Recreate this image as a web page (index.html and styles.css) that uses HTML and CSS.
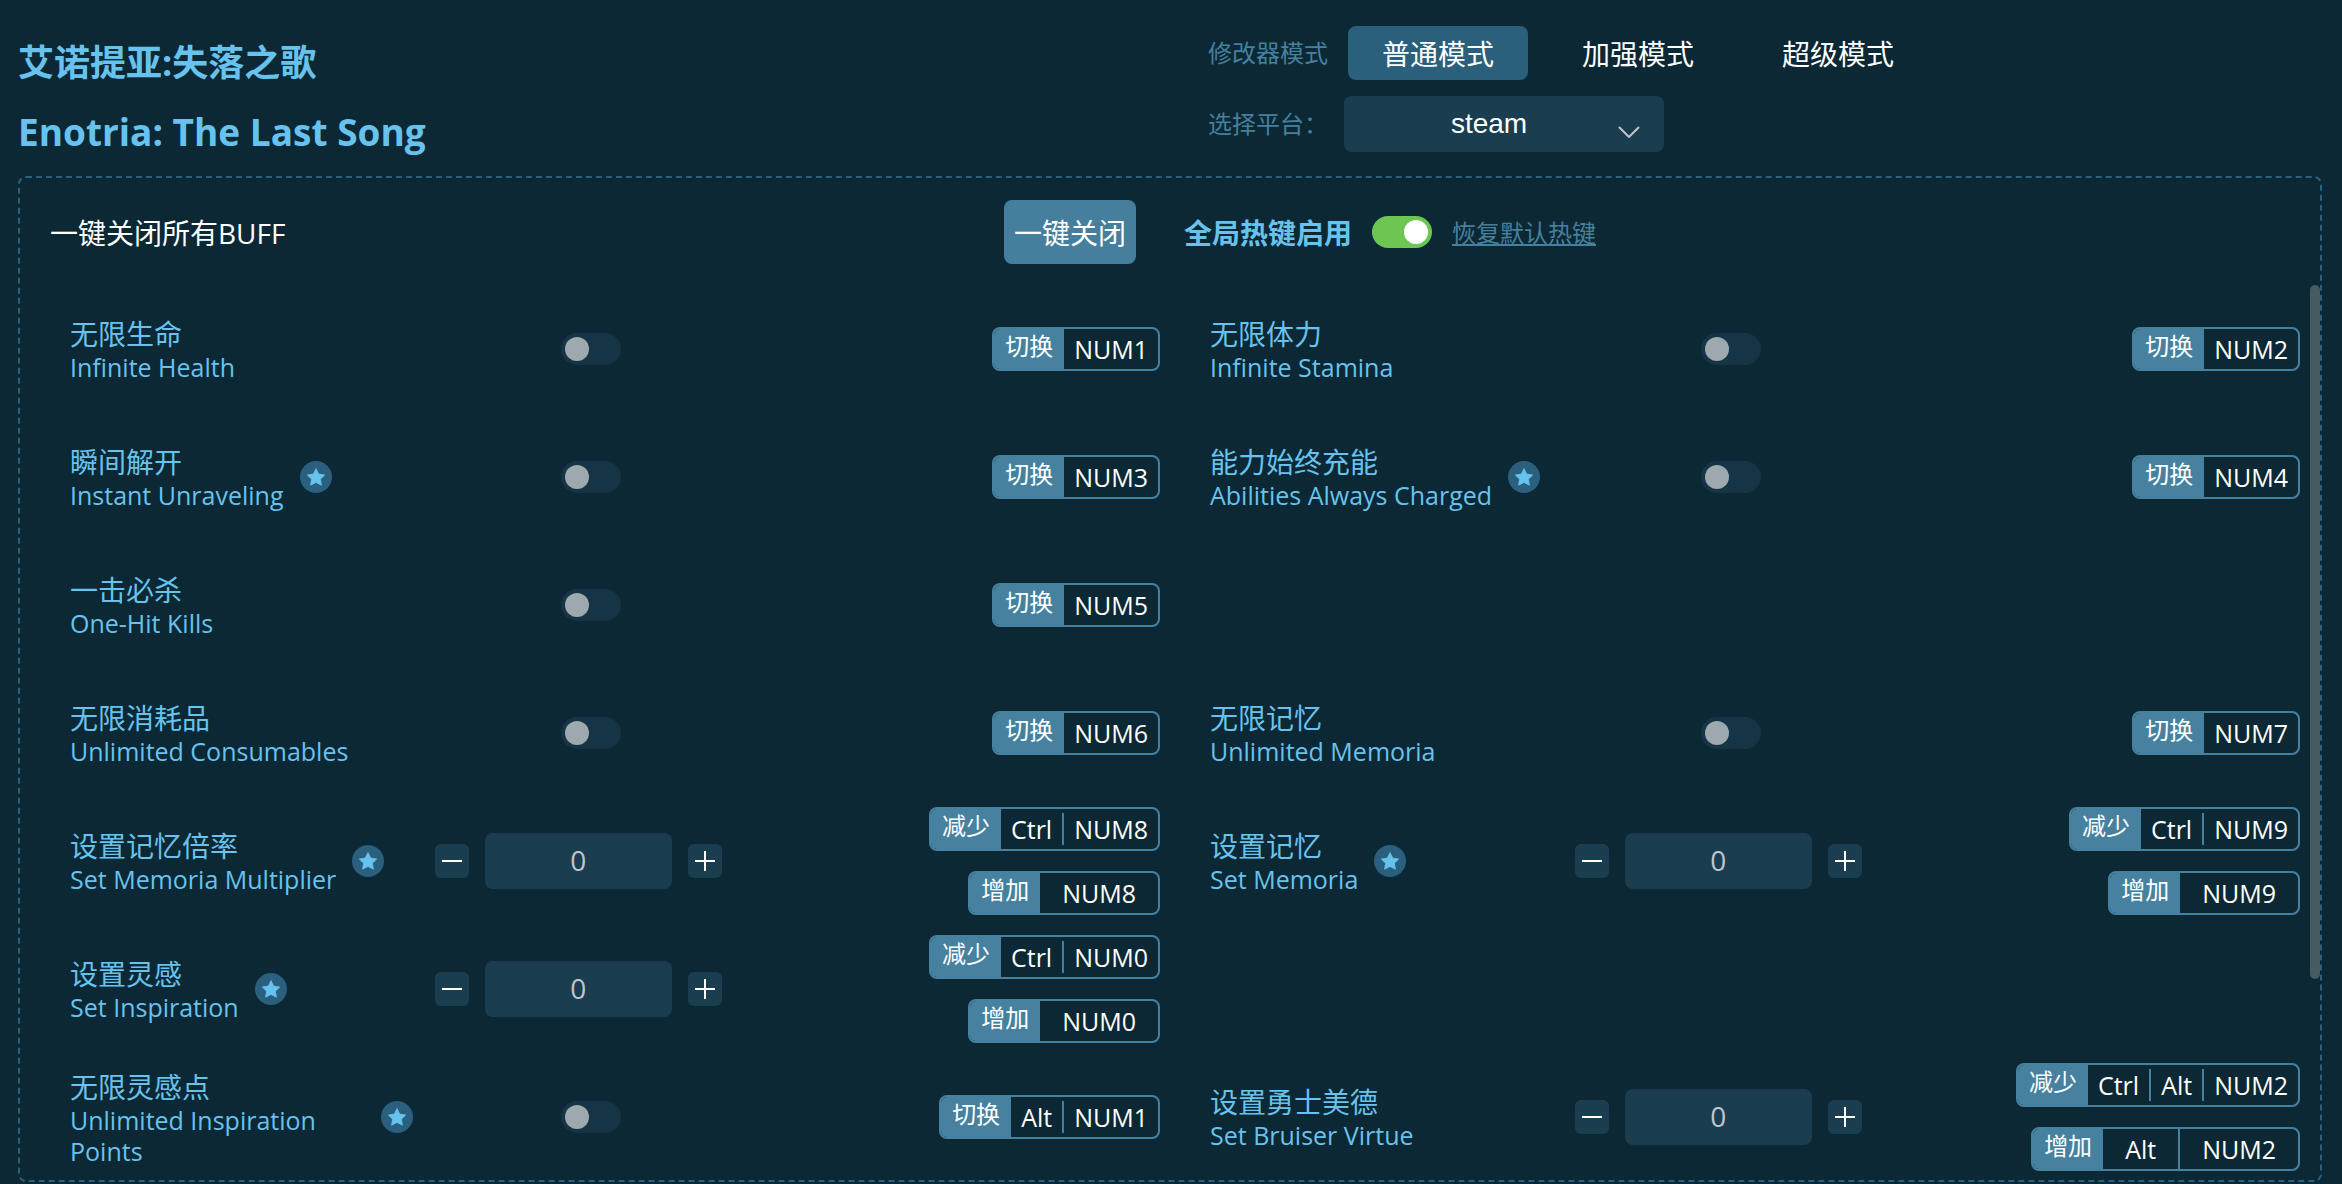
FILE: index.html
```html
<!DOCTYPE html>
<html lang="zh-CN">
<head>
    <meta charset="UTF-8">
    <meta name="viewport" content="width=device-width, initial-scale=1.0">
    <title>艾诺提亚:失落之歌</title>
    <link rel="stylesheet" href="styles.css">
</head>
<body>

    <svg class="sprite" aria-hidden="true">
        <symbol id="star" viewBox="0 0 32 32">
            <circle cx="16" cy="16" r="16" fill="#2a607d"/>
            <path d="M16 7.600l2.700 5.500 6 .9-4.300 4.200 1 6-5.400-2.800-5.400 2.800 1-6L7.300 14l6-.9z" fill="#68c2ee" stroke="#68c2ee" stroke-width="0.800" stroke-linejoin="round"/>
        </symbol>
        <symbol id="minus" viewBox="0 0 20 20">
            <path d="M0 10h20" stroke="#fff" stroke-width="2"/>
        </symbol>
        <symbol id="plus" viewBox="0 0 20 20">
            <path d="M0 10h20M10 0v20" stroke="#fff" stroke-width="2"/>
        </symbol>
    </svg>

    <header class="header">
        <div class="titles">
            <h1 class="title">艾诺提亚:失落之歌</h1>
            <h2 class="title title-en">Enotria: The Last Song</h2>
        </div>
        <div class="options">
            <div class="modes">
                <span class="option-label">修改器模式</span>
                <div class="mode-list">
                    <button class="mode active">普通模式</button>
                    <button class="mode">加强模式</button>
                    <button class="mode">超级模式</button>
                </div>
            </div>
            <div class="platform">
                <label class="option-label" for="platform">选择平台：</label>
                <div class="select-wrap">
                    <select id="platform" class="select">
                        <option>steam</option>
                    </select>
                    <svg class="arrow" viewBox="0 0 22 12"><path d="M1 1l10 10L21 1" fill="none" stroke="#c0c4cc" stroke-width="2"/></svg>
                </div>
            </div>
        </div>
    </header>

    <main class="panel">
        <div class="panel-header">
            <div class="close-all">
                <span>一键关闭所有BUFF</span>
                <button class="close-btn">一键关闭</button>
            </div>
            <div class="hotkeys">
                <label class="hotkeys-label" for="hotkeys">全局热键启用</label>
                <input type="checkbox" class="switch" id="hotkeys" checked>
                <a class="restore" href="#">恢复默认热键</a>
            </div>
        </div>

        <div class="scroll">
            <div class="list">

                <div class="item">
                    <div class="name">
                        <label for="health"><span class="cn">无限生命</span><span class="en">Infinite Health</span></label>
                    </div>
                    <div class="control"><input type="checkbox" class="switch" id="health"></div>
                    <div class="keys">
                        <div class="key"><span class="act">切换</span><kbd>NUM1</kbd></div>
                    </div>
                </div>

                <div class="item">
                    <div class="name">
                        <label for="stamina"><span class="cn">无限体力</span><span class="en">Infinite Stamina</span></label>
                    </div>
                    <div class="control"><input type="checkbox" class="switch" id="stamina"></div>
                    <div class="keys">
                        <div class="key"><span class="act">切换</span><kbd>NUM2</kbd></div>
                    </div>
                </div>

                <div class="item">
                    <div class="name">
                        <label for="unravel"><span class="cn">瞬间解开</span><span class="en">Instant Unraveling</span></label>
                        <svg class="star"><use href="#star"/></svg>
                    </div>
                    <div class="control"><input type="checkbox" class="switch" id="unravel"></div>
                    <div class="keys">
                        <div class="key"><span class="act">切换</span><kbd>NUM3</kbd></div>
                    </div>
                </div>

                <div class="item">
                    <div class="name">
                        <label for="abilities"><span class="cn">能力始终充能</span><span class="en">Abilities Always Charged</span></label>
                        <svg class="star"><use href="#star"/></svg>
                    </div>
                    <div class="control"><input type="checkbox" class="switch" id="abilities"></div>
                    <div class="keys">
                        <div class="key"><span class="act">切换</span><kbd>NUM4</kbd></div>
                    </div>
                </div>

                <div class="item left">
                    <div class="name">
                        <label for="kills"><span class="cn">一击必杀</span><span class="en">One-Hit Kills</span></label>
                    </div>
                    <div class="control"><input type="checkbox" class="switch" id="kills"></div>
                    <div class="keys">
                        <div class="key"><span class="act">切换</span><kbd>NUM5</kbd></div>
                    </div>
                </div>

                <div class="item left">
                    <div class="name">
                        <label for="consumables"><span class="cn">无限消耗品</span><span class="en">Unlimited Consumables</span></label>
                    </div>
                    <div class="control"><input type="checkbox" class="switch" id="consumables"></div>
                    <div class="keys">
                        <div class="key"><span class="act">切换</span><kbd>NUM6</kbd></div>
                    </div>
                </div>

                <div class="item">
                    <div class="name">
                        <label for="memoria"><span class="cn">无限记忆</span><span class="en">Unlimited Memoria</span></label>
                    </div>
                    <div class="control"><input type="checkbox" class="switch" id="memoria"></div>
                    <div class="keys">
                        <div class="key"><span class="act">切换</span><kbd>NUM7</kbd></div>
                    </div>
                </div>

                <div class="item">
                    <div class="name">
                        <label for="multiplier"><span class="cn">设置记忆倍率</span><span class="en">Set Memoria Multiplier</span></label>
                        <svg class="star"><use href="#star"/></svg>
                    </div>
                    <div class="control number">
                        <button class="step" aria-label="减少"><svg><use href="#minus"/></svg></button>
                        <input type="text" class="value" id="multiplier" value="0">
                        <button class="step" aria-label="增加"><svg><use href="#plus"/></svg></button>
                    </div>
                    <div class="keys">
                        <div class="key"><span class="act">减少</span><kbd>Ctrl</kbd><kbd>NUM8</kbd></div>
                        <div class="key wide"><span class="act">增加</span><kbd>NUM8</kbd></div>
                    </div>
                </div>

                <div class="item">
                    <div class="name">
                        <label for="setMemoria"><span class="cn">设置记忆</span><span class="en">Set Memoria</span></label>
                        <svg class="star"><use href="#star"/></svg>
                    </div>
                    <div class="control number">
                        <button class="step" aria-label="减少"><svg><use href="#minus"/></svg></button>
                        <input type="text" class="value" id="setMemoria" value="0">
                        <button class="step" aria-label="增加"><svg><use href="#plus"/></svg></button>
                    </div>
                    <div class="keys">
                        <div class="key"><span class="act">减少</span><kbd>Ctrl</kbd><kbd>NUM9</kbd></div>
                        <div class="key wide"><span class="act">增加</span><kbd>NUM9</kbd></div>
                    </div>
                </div>

                <div class="item left">
                    <div class="name">
                        <label for="inspiration"><span class="cn">设置灵感</span><span class="en">Set Inspiration</span></label>
                        <svg class="star"><use href="#star"/></svg>
                    </div>
                    <div class="control number">
                        <button class="step" aria-label="减少"><svg><use href="#minus"/></svg></button>
                        <input type="text" class="value" id="inspiration" value="0">
                        <button class="step" aria-label="增加"><svg><use href="#plus"/></svg></button>
                    </div>
                    <div class="keys">
                        <div class="key"><span class="act">减少</span><kbd>Ctrl</kbd><kbd>NUM0</kbd></div>
                        <div class="key wide"><span class="act">增加</span><kbd>NUM0</kbd></div>
                    </div>
                </div>

                <div class="item left">
                    <div class="name">
                        <label for="points"><span class="cn">无限灵感点</span><span class="en">Unlimited Inspiration Points</span></label>
                        <svg class="star"><use href="#star"/></svg>
                    </div>
                    <div class="control"><input type="checkbox" class="switch" id="points"></div>
                    <div class="keys">
                        <div class="key"><span class="act">切换</span><kbd>Alt</kbd><kbd>NUM1</kbd></div>
                    </div>
                </div>

                <div class="item">
                    <div class="name">
                        <label for="bruiser"><span class="cn">设置勇士美德</span><span class="en">Set Bruiser Virtue</span></label>
                    </div>
                    <div class="control number">
                        <button class="step" aria-label="减少"><svg><use href="#minus"/></svg></button>
                        <input type="text" class="value" id="bruiser" value="0">
                        <button class="step" aria-label="增加"><svg><use href="#plus"/></svg></button>
                    </div>
                    <div class="keys">
                        <div class="key"><span class="act">减少</span><kbd>Ctrl</kbd><kbd>Alt</kbd><kbd>NUM2</kbd></div>
                        <div class="key wide"><span class="act">增加</span><kbd>Alt</kbd><kbd>NUM2</kbd></div>
                    </div>
                </div>

            </div>
            <div class="scrollbar"><div class="thumb"></div></div>
        </div>
    </main>

</body>
</html>
```
FILE: styles.css
```css
* {
    box-sizing: border-box;
}

body {
    margin: 0;
    padding: 0 20px 2px 18px;
    height: 100vh;
    display: flex;
    flex-direction: column;
    background-color: #0c2834;
    color: #fff;
    font-family: "Open Sans", "Noto Sans CJK SC", sans-serif;
    font-size: 24px;
    overflow: hidden;
}

button, input, select, kbd {
    font-family: inherit;
}

button {
    padding: 0;
    border: none;
    color: #fff;
    cursor: pointer;
}

.sprite {
    display: none;
}

/* header */
.header {
    display: grid;
    grid-template-columns: 1fr 1fr;
    height: 176px;
}

.titles {
    padding-top: 28px;
}

.title {
    margin: 0;
    font-size: 36px;
    line-height: 69px;
    font-weight: bold;
    color: #68c2ee;
}

.title-en {
    font-size: 37px;
}

.options {
    padding: 26px 0 0 38px;
}

.modes, .platform {
    display: flex;
    align-items: center;
}

.option-label {
    color: #45809e;
    line-height: 36px;
}

.modes {
    gap: 20px;
}

.mode-list {
    display: flex;
    gap: 20px;
}

.mode {
    width: 180px;
    height: 54px;
    border-radius: 8px;
    background: none;
    font-size: 28px;
}

.mode.active {
    background-color: #2b607c;
}

.platform {
    gap: 16px;
    margin-top: 16px;
}

.select-wrap {
    position: relative;
    width: 320px;
}

.select {
    appearance: none;
    width: 100%;
    height: 56px;
    padding: 0 30px 2px 0;
    border: none;
    border-radius: 8px;
    background-color: #1a3e50;
    color: #fff;
    font-family: "Liberation Sans", sans-serif;
    font-size: 28px;
    text-align: center;
    text-align-last: center;
}

.arrow {
    position: absolute;
    right: 24px;
    bottom: 14px;
    width: 22px;
    height: 12px;
}

/* panel */
.panel {
    flex: 1;
    min-height: 0;
    display: flex;
    flex-direction: column;
    border: 2px dashed #2b617e;
    border-radius: 8px;
}

.panel-header {
    display: grid;
    grid-template-columns: 1fr 1fr;
    height: 107px;
    font-size: 28px;
}

.close-all {
    display: flex;
    align-items: center;
    justify-content: space-between;
    padding: 0 34px 0 30px;
}

.close-btn {
    width: 132px;
    height: 64px;
    border-radius: 8px;
    background-color: #467f9d;
    font-size: 28px;
}

.hotkeys {
    display: flex;
    align-items: center;
    gap: 20px;
    padding-left: 14px;
}

.hotkeys-label {
    font-weight: bold;
    color: #68c2ee;
}

.restore {
    font-size: 24px;
    color: #45809e;
}

.switch {
    appearance: none;
    display: flex;
    align-items: center;
    width: 60px;
    height: 32px;
    margin: 0;
    padding: 4px;
    border-radius: 16px;
    background-color: #153547;
    cursor: pointer;
}

.switch::before {
    content: "";
    width: 24px;
    height: 24px;
    border-radius: 50%;
    background-color: #9ea9ad;
}

.switch:checked {
    justify-content: flex-end;
    background-color: #6cc651;
}

.switch:checked::before {
    background-color: #fff;
}

/* cheat list */
.scroll {
    flex: 1;
    min-height: 0;
    display: flex;
    overflow: hidden;
}

.list {
    flex: 1;
    display: grid;
    grid-template-columns: 1fr 1fr;
    grid-auto-rows: 128px;
    padding-left: 10px;
}

.item {
    display: grid;
    grid-template-columns: repeat(3, minmax(0, 1fr));
    column-gap: 4px;
    align-items: center;
    padding: 0 10px 0 40px;
}

.left {
    grid-column: 1;
}

.name {
    display: flex;
    align-items: center;
    gap: 16px;
    padding-right: 18px;
    color: #68c2ee;
}

.name label {
    padding-top: 2px;
}

.cn, .en {
    display: block;
}

.cn {
    font-size: 28px;
    line-height: 35px;
}

.en {
    font-size: 25px;
    line-height: 31px;
}

.star {
    flex: none;
    width: 32px;
    height: 32px;
}

.control {
    padding-left: 126px;
}

.number {
    display: flex;
    align-items: center;
    gap: 16px;
    padding-left: 0;
}

.step {
    display: flex;
    align-items: center;
    justify-content: center;
    width: 34px;
    height: 34px;
    border-radius: 6px;
    background-color: #1a3e50;
}

.step svg {
    width: 20px;
    height: 20px;
}

.value {
    width: 187px;
    height: 56px;
    padding: 0 0 2px;
    border: none;
    border-radius: 8px;
    background-color: #1a3e50;
    color: #c0c4cc;
    font-size: 28px;
    text-align: center;
}

.keys {
    display: flex;
    flex-direction: column;
    align-items: flex-end;
    gap: 20px;
}

.key {
    display: flex;
    align-items: center;
    height: 44px;
    border: 2px solid #4682a0;
    border-radius: 8px;
    overflow: hidden;
}

.act {
    width: 70px;
    height: 40px;
    line-height: 34px;
    text-align: center;
    background-color: #4682a0;
}

.key kbd {
    padding: 0 10px;
    font-size: 25px;
    line-height: 32px;
}

.key kbd + kbd {
    border-left: 2px solid #4682a0;
}

.wide kbd {
    padding: 0 22px;
    line-height: 40px;
}

.scrollbar {
    width: 10px;
}

.thumb {
    height: 77.5%;
    border-radius: 5px;
    background-color: #465a5f;
}
```
